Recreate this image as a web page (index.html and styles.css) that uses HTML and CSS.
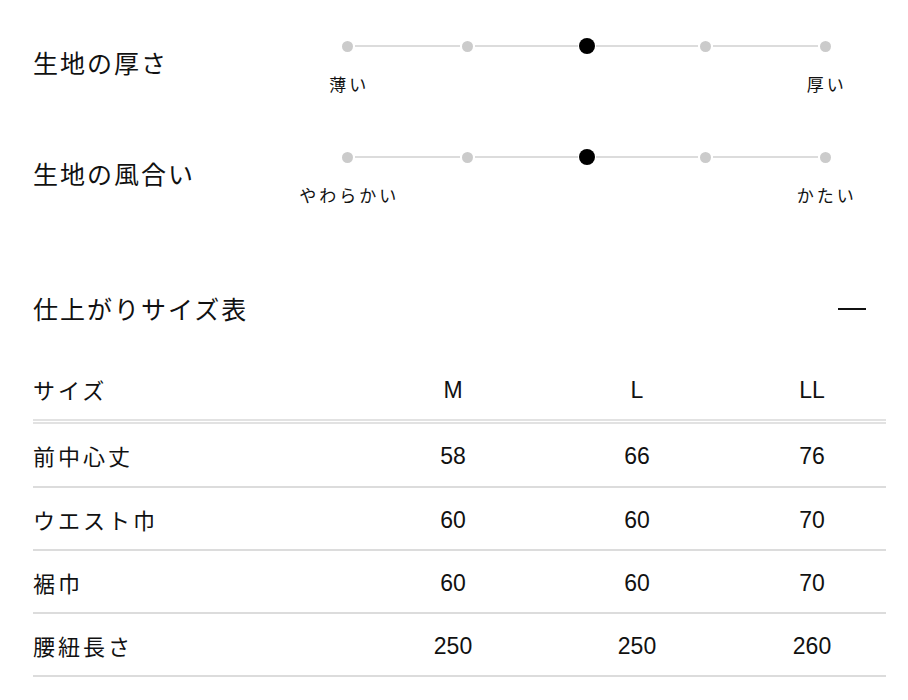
FILE: index.html
```html
<!DOCTYPE html>
<html lang="ja">
<head>
<meta charset="utf-8">
<title>生地・サイズ</title>
<link rel="stylesheet" href="styles.css">
</head>
<body>
<main class="page">
  <section class="feel-list">
    <div class="feel">
      <h3 class="feel-title">生地の厚さ</h3>
      <div class="scale">
        <div class="scale-track">
          <span class="step"><i class="dot"></i></span>
          <span class="step"><i class="dot"></i></span>
          <span class="step"><i class="dot is-active"></i></span>
          <span class="step"><i class="dot"></i></span>
          <span class="step"><i class="dot"></i></span>
        </div>
        <div class="scale-labels">
          <span class="label label-start">薄い</span>
          <span class="label label-end">厚い</span>
        </div>
      </div>
    </div>
    <div class="feel">
      <h3 class="feel-title">生地の風合い</h3>
      <div class="scale">
        <div class="scale-track">
          <span class="step"><i class="dot"></i></span>
          <span class="step"><i class="dot"></i></span>
          <span class="step"><i class="dot is-active"></i></span>
          <span class="step"><i class="dot"></i></span>
          <span class="step"><i class="dot"></i></span>
        </div>
        <div class="scale-labels">
          <span class="label label-start">やわらかい</span>
          <span class="label label-end">かたい</span>
        </div>
      </div>
    </div>
  </section>

  <section class="size">
    <div class="size-head">
      <h2 class="size-title">仕上がりサイズ表</h2>
      <span class="collapse" aria-label="閉じる"></span>
    </div>
    <table class="size-table">
      <colgroup>
        <col class="c-name"><col class="c-m"><col class="c-l"><col class="c-ll">
      </colgroup>
      <thead>
        <tr><th class="name">サイズ</th><th>M</th><th>L</th><th>LL</th></tr>
      </thead>
      <tbody>
        <tr><td class="name">前中心丈</td><td>58</td><td>66</td><td>76</td></tr>
        <tr><td class="name">ウエスト巾</td><td>60</td><td>60</td><td>70</td></tr>
        <tr><td class="name">裾巾</td><td>60</td><td>60</td><td>70</td></tr>
        <tr><td class="name">腰紐長さ</td><td>250</td><td>250</td><td>260</td></tr>
      </tbody>
    </table>
  </section>
</main>
</body>
</html>
```

FILE: styles.css
```css
* { box-sizing: border-box; }

html, body {
  margin: 0;
  padding: 0;
  background: #fff;
}

body {
  color: #111;
  font-family: "Noto Sans CJK JP", "Noto Sans", sans-serif;
}

.page {
  padding: 0 22px 0 33px;
}

/* ---------- feel sliders ---------- */
.feel-list {
  padding-top: 38px;
}

.feel {
  display: flex;
  align-items: flex-start;
  margin-bottom: 53px;
}

.feel-title {
  width: 255px;
  margin: 6px 0 0;
  font-size: 25px;
  line-height: 36px;
  font-weight: 400;
  letter-spacing: 2px;
}

.scale {
  width: 597px;
}

.scale-track {
  display: grid;
  grid-template-columns: repeat(5, 1fr);
  height: 16px;
}

.step {
  display: flex;
  align-items: center;
}

.step::before,
.step::after {
  content: "";
  flex: 1;
  height: 2px;
  background: #dcdcdc;
}

.step:first-child::before,
.step:last-child::after {
  background: transparent;
}

.dot {
  display: block;
  width: 11px;
  height: 11px;
  margin: 0 2px;
  border-radius: 50%;
  background: #cbcbcb;
}

.dot.is-active {
  width: 16px;
  height: 16px;
  margin: 0 1px;
  background: #000;
}

.scale-labels {
  display: grid;
  grid-template-columns: repeat(5, 1fr);
  margin-top: 18px;
}

.label {
  font-size: 17px;
  line-height: 24px;
  letter-spacing: 3px;
  text-align: center;
  padding-left: 3px;
  white-space: nowrap;
}

.label-start { grid-column: 1; }
.label-end { grid-column: 5; }

/* ---------- size table ---------- */
.size {
  padding-top: 30px;
}

.size-head {
  display: flex;
  align-items: center;
  justify-content: space-between;
  height: 36px;
  margin-right: 20px;
}

.size-title {
  margin: 0;
  font-size: 25px;
  line-height: 36px;
  font-weight: 400;
  letter-spacing: 2px;
}

.collapse {
  display: block;
  width: 28px;
  height: 2px;
  margin-top: 2px;
  background: #111;
}

.size-table {
  width: 100%;
  margin-top: 32px;
  border-collapse: separate;
  border-spacing: 0;
  table-layout: fixed;
}

.c-name { width: 337px; }
.c-m { width: 166px; }
.c-l { width: 202px; }
.c-ll { width: 148px; }

.size-table th,
.size-table td {
  padding: 3px 0 0;
  text-align: center;
  vertical-align: middle;
  font-family: "Liberation Sans", "Noto Sans CJK JP", sans-serif;
  font-size: 23px;
  font-weight: 400;
}

.size-table th {
  height: 66px;
  border-bottom: 5px double #e2e2e2;
}

.size-table td {
  height: 63px;
  border-bottom: 2px solid #dcdcdc;
}

.size-table tbody tr:first-child td {
  height: 64px;
}

.size-table .name {
  padding-top: 0;
  text-align: left;
  font-family: "Noto Sans CJK JP", sans-serif;
  font-size: 22px;
  letter-spacing: 3px;
}
```
